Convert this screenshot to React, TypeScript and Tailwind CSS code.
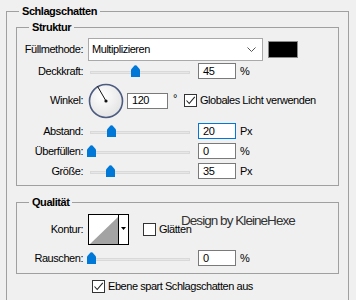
import type { ReactNode } from 'react';

function Thumb({ left }: { left: number }) {
  return (
    <svg
      className="absolute top-[2px]"
      style={{ left }}
      width="9"
      height="12"
      viewBox="0 0 9 12"
    >
      <path d="M0 4.5 L3.5 0.6 Q4.5 -0.2 5.5 0.6 L9 4.5 L9 12 L0 12 Z" fill="#0078d7" />
    </svg>
  );
}

function Slider({ pos }: { pos: number }) {
  return (
    <div className="relative w-[110px] h-[16px] shrink-0">
      <div className="absolute left-[2px] top-[8px] w-[100px] h-[3px] bg-[#e7e7e7] border border-[#d9d9d9]" />
      <Thumb left={pos} />
    </div>
  );
}

function NumInput({ value, focused, width = 38 }: { value: string; focused?: boolean; width?: number }) {
  return (
    <div
      className={`h-[16px] bg-white border flex items-center pl-[4px] text-black shrink-0 ${
        focused ? 'border-[#0078d7]' : 'border-[#7a7a7a]'
      }`}
      style={{ width }}
    >
      {value}
    </div>
  );
}

function Label({ children }: { children: ReactNode }) {
  return <div className="w-[66px] shrink-0 text-right">{children}</div>;
}

function Checkbox({ checked }: { checked?: boolean }) {
  return (
    <div className="w-[13px] h-[13px] bg-white border border-[#333] flex items-center justify-center shrink-0">
      {checked && (
        <svg width="11" height="11" viewBox="0 0 11 11">
          <path d="M1.5 5.5 L4.2 8.5 L9.8 1.8" fill="none" stroke="#222" strokeWidth="1.1" />
        </svg>
      )}
    </div>
  );
}

function SliderRow({ label, pos, value, unit, focused, mt }: { label: string; pos: number; value: string; unit: string; focused?: boolean; mt: string }) {
  return (
    <div className={`flex items-center h-[16px] ${mt}`}>
      <Label>{label}</Label>
      <div className="ml-[5px] flex items-center">
        <Slider pos={pos} />
        <NumInput value={value} focused={focused} />
        <span className="ml-[4px]">{unit}</span>
      </div>
    </div>
  );
}

function Dial() {
  return (
    <svg width="36" height="36" viewBox="0 0 36 36" className="shrink-0">
      <defs>
        <radialGradient id="dialFill" cx="0.4" cy="0.35" r="0.7">
          <stop offset="0" stopColor="#ffffff" />
          <stop offset="1" stopColor="#e2e2e2" />
        </radialGradient>
      </defs>
      <circle cx="18" cy="18" r="16.5" fill="url(#dialFill)" stroke="#4c5b80" strokeWidth="1.6" />
      <line x1="18" y1="18" x2="9.5" y2="3.3" stroke="#111" strokeWidth="1" />
      <circle cx="18" cy="18" r="1.6" fill="#111" />
    </svg>
  );
}

function ContourPicker() {
  return (
    <div className="flex h-[31px] border border-black bg-white shrink-0">
      <svg width="29" height="29" viewBox="0 0 29 29" className="block">
        <rect width="29" height="29" fill="#ffffff" />
        <polygon points="1,29 29,2 29,29" fill="#a3a3a3" />
      </svg>
      <div className="w-[10px] border-l border-black flex items-start justify-center pt-[12px]">
        <svg width="5" height="3" viewBox="0 0 5 3">
          <polygon points="0,0 5,0 2.5,3" fill="#000" />
        </svg>
      </div>
    </div>
  );
}

export default function App() {
  return (
    <div className="relative w-[356px] h-[300px] overflow-hidden bg-[#f0f0f0] text-[11px] leading-[13px] tracking-[-0.45px] text-black font-['Liberation_Sans',Arial,sans-serif]">
      <fieldset className="mt-[5px] ml-[6px] w-[343px] h-[310px] border border-b-0 border-[#a0a0a0]">
        <legend className="ml-[12px] px-[3px] font-bold leading-[13px]">Schlagschatten</legend>

        {/* Struktur */}
        <fieldset className="mt-[3px] ml-[9px] w-[323px] h-[165px] border border-[#a0a0a0]">
          <legend className="ml-[12px] px-[3px] font-bold leading-[13px]">Struktur</legend>

          <div className="flex items-center h-[23px] mt-[4px]">
            <Label>Füllmethode:</Label>
            <div className="ml-[5px] w-[175px] h-[23px] bg-white border border-[#a9a9a9] flex items-center justify-between pl-[3px] pr-[6px]">
              <span>Multiplizieren</span>
              <svg width="9" height="5" viewBox="0 0 9 5">
                <path d="M0.5 0.5 L4.5 4.5 L8.5 0.5" fill="none" stroke="#555" strokeWidth="1" />
              </svg>
            </div>
            <div className="ml-[5px] w-[30px] h-[17px] bg-black border border-[#8a8a8a]" />
          </div>

          <SliderRow label="Deckkraft:" pos={43} value="45" unit="%" mt="mt-[2px]" />

          <div className="flex items-center h-[35px] mt-[4px]">
            <Label>Winkel:</Label>
            <div className="ml-[5px]">
              <Dial />
            </div>
            <div className="ml-[3px]">
              <NumInput value="120" width={41} />
            </div>
            <span className="ml-[5px] self-start mt-[9px]">°</span>
            <div className="ml-[7px] flex items-center">
              <Checkbox checked />
              <span className="ml-[3px]">Globales Licht verwenden</span>
            </div>
          </div>

          <SliderRow label="Abstand:" pos={19} value="20" unit="Px" focused mt="mt-[5px]" />
          <SliderRow label="Überfüllen:" pos={-1} value="0" unit="%" mt="mt-[4px]" />
          <SliderRow label="Größe:" pos={18} value="35" unit="Px" mt="mt-[4px]" />
        </fieldset>

        {/* Qualität */}
        <fieldset className="mt-[10px] ml-[9px] w-[323px] h-[78px] border border-[#a0a0a0]">
          <legend className="ml-[12px] px-[3px] font-bold leading-[13px]">Qualität</legend>

          <div className="flex items-center h-[31px] mt-[5px]">
            <Label>Kontur:</Label>
            <div className="ml-[5px]">
              <ContourPicker />
            </div>
            <div className="ml-[14px] flex items-center">
              <Checkbox />
              <span className="ml-[3px]">Glätten</span>
            </div>
          </div>

          <SliderRow label="Rauschen:" pos={-1} value="0" unit="%" mt="mt-[5px]" />
        </fieldset>

        <div className="mt-[6px] ml-[85px] flex items-center">
          <Checkbox checked />
          <span className="ml-[3px]">Ebene spart Schlagschatten aus</span>
        </div>
      </fieldset>

      <div className="absolute left-[181px] top-[213px] text-[13.5px] leading-[16px] tracking-[-0.95px] text-[#333] font-['Liberation_Sans',Arial,sans-serif]">
        Design by KleineHexe
      </div>
    </div>
  );
}
